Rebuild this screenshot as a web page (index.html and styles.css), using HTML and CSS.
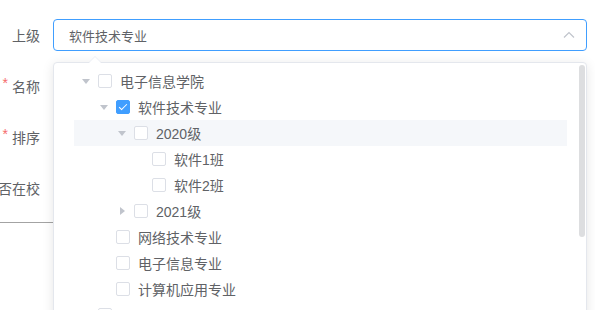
FILE: index.html
```html
<!DOCTYPE html>
<html lang="zh-CN">
<head>
    <meta charset="UTF-8">
    <meta name="viewport" content="width=device-width, initial-scale=1.0">
    <title>编辑部门</title>
    <link rel="stylesheet" href="styles.css">
</head>
<body>
    <div class="form">
        <div class="form-item">
            <label class="label">上级</label>
            <div class="content">
                <div class="select is-focus">
                    <span class="select-text">软件技术专业</span>
                    <svg class="select-arrow" width="12" height="8" viewBox="0 0 12 8">
                        <polyline points="1,6.5 6,1.5 11,6.5" fill="none" stroke="#c0c4cc" stroke-width="1.2"/>
                    </svg>
                </div>
            </div>
        </div>
        <div class="form-item">
            <label class="label"><span class="star">*</span>名称</label>
            <div class="content"></div>
        </div>
        <div class="form-item">
            <label class="label"><span class="star">*</span>排序</label>
            <div class="content"></div>
        </div>
        <div class="form-item">
            <label class="label">是否在校</label>
            <div class="content"></div>
        </div>
        <div class="divider"></div>
    </div>

    <div class="dropdown">
        <div class="popper-arrow"></div>
        <div class="tree">
            <div class="node">
                <span class="expand open"></span><span class="checkbox"></span><span class="node-label">电子信息学院</span>
            </div>
            <div class="node lv2">
                <span class="expand open"></span><span class="checkbox checked"></span><span class="node-label">软件技术专业</span>
            </div>
            <div class="node lv3 hover">
                <span class="expand open"></span><span class="checkbox"></span><span class="node-label">2020级</span>
            </div>
            <div class="node lv4">
                <span class="expand leaf"></span><span class="checkbox"></span><span class="node-label">软件1班</span>
            </div>
            <div class="node lv4">
                <span class="expand leaf"></span><span class="checkbox"></span><span class="node-label">软件2班</span>
            </div>
            <div class="node lv3">
                <span class="expand"></span><span class="checkbox"></span><span class="node-label">2021级</span>
            </div>
            <div class="node lv2">
                <span class="expand leaf"></span><span class="checkbox"></span><span class="node-label">网络技术专业</span>
            </div>
            <div class="node lv2">
                <span class="expand leaf"></span><span class="checkbox"></span><span class="node-label">电子信息专业</span>
            </div>
            <div class="node lv2">
                <span class="expand leaf"></span><span class="checkbox"></span><span class="node-label">计算机应用专业</span>
            </div>
            <div class="node">
                <span class="expand leaf"></span><span class="checkbox"></span><span class="node-label"></span>
            </div>
        </div>
        <div class="scrollbar"></div>
    </div>
</body>
</html>
```

FILE: styles.css
```css
body {
    margin: 0;
    height: 310px;
    overflow: hidden;
    position: relative;
    background-color: #fff;
    font-family: "Helvetica Neue", "Liberation Sans", "Noto Sans CJK SC", sans-serif;
    font-size: 14px;
    color: #606266;
}

.form {
    padding-top: 19px;
}

.form-item {
    display: flex;
    height: 32px;
    margin-bottom: 19px;
}

.label {
    width: 40px;
    flex-shrink: 0;
    padding-right: 13px;
    display: flex;
    justify-content: flex-end;
    align-items: center;
    white-space: nowrap;
    color: #606266;
}

.star {
    color: #f56c6c;
    margin-right: 4px;
    position: relative;
    top: -3px;
}

.content {
    flex: 1;
    margin-right: 8px;
}

.select {
    height: 30px;
    border: 1px solid #409eff;
    border-radius: 4px;
    display: flex;
    align-items: center;
    justify-content: space-between;
    padding: 0 11px 0 15px;
    font-size: 13px;
}

.select-arrow {
    display: block;
}

.divider {
    border-top: 1px solid #a3a3a3;
    width: 53px;
    margin-top: -1px;
}

.dropdown {
    position: absolute;
    left: 53px;
    top: 62px;
    width: 532px;
    height: 300px;
    background-color: #fff;
    border: 1px solid #e4e7ed;
    border-radius: 4px;
    box-shadow: 0 2px 12px rgba(0, 0, 0, 0.1);
}

.popper-arrow {
    position: absolute;
    left: 35px;
    top: -7px;
    width: 0;
    height: 0;
    border-left: 6px solid transparent;
    border-right: 6px solid transparent;
    border-bottom: 6px solid #ebeef5;
}

.popper-arrow::after {
    content: "";
    position: absolute;
    left: -6px;
    top: 1px;
    border-left: 6px solid transparent;
    border-right: 6px solid transparent;
    border-bottom: 6px solid #fff;
}

.tree {
    padding: 5px 19px 0 20px;
}

.node {
    height: 26px;
    display: flex;
    align-items: center;
}

.node.lv2 { padding-left: 18px; }
.node.lv3 { padding-left: 36px; }
.node.lv4 { padding-left: 54px; }

.node.hover {
    background-color: #f5f7fa;
}

.expand {
    width: 24px;
    height: 26px;
    flex-shrink: 0;
    display: flex;
    align-items: center;
    justify-content: center;
}

.expand::before {
    content: "";
    width: 0;
    height: 0;
    border-top: 4px solid transparent;
    border-bottom: 4px solid transparent;
    border-left: 5px solid #c0c4cc;
}

.expand.open::before {
    border-left: 4px solid transparent;
    border-right: 4px solid transparent;
    border-top: 5px solid #c0c4cc;
    border-bottom: 0;
}

.expand.leaf::before {
    display: none;
}

.checkbox {
    width: 12px;
    height: 12px;
    flex-shrink: 0;
    border: 1px solid #dcdfe6;
    border-radius: 2px;
    margin-right: 8px;
    position: relative;
    background-color: #fff;
}

.checkbox.checked {
    background-color: #409eff;
    border-color: #409eff;
}

.checkbox.checked::after {
    content: "";
    position: absolute;
    left: 4px;
    top: 1px;
    width: 3px;
    height: 7px;
    border: 1px solid #fff;
    border-left: 0;
    border-top: 0;
    transform: rotate(45deg);
}

.node-label {
    white-space: nowrap;
}

.scrollbar {
    position: absolute;
    right: 1px;
    top: 2px;
    width: 6px;
    height: 172px;
    border-radius: 3px;
    background-color: rgba(144, 147, 153, 0.3);
}
```
